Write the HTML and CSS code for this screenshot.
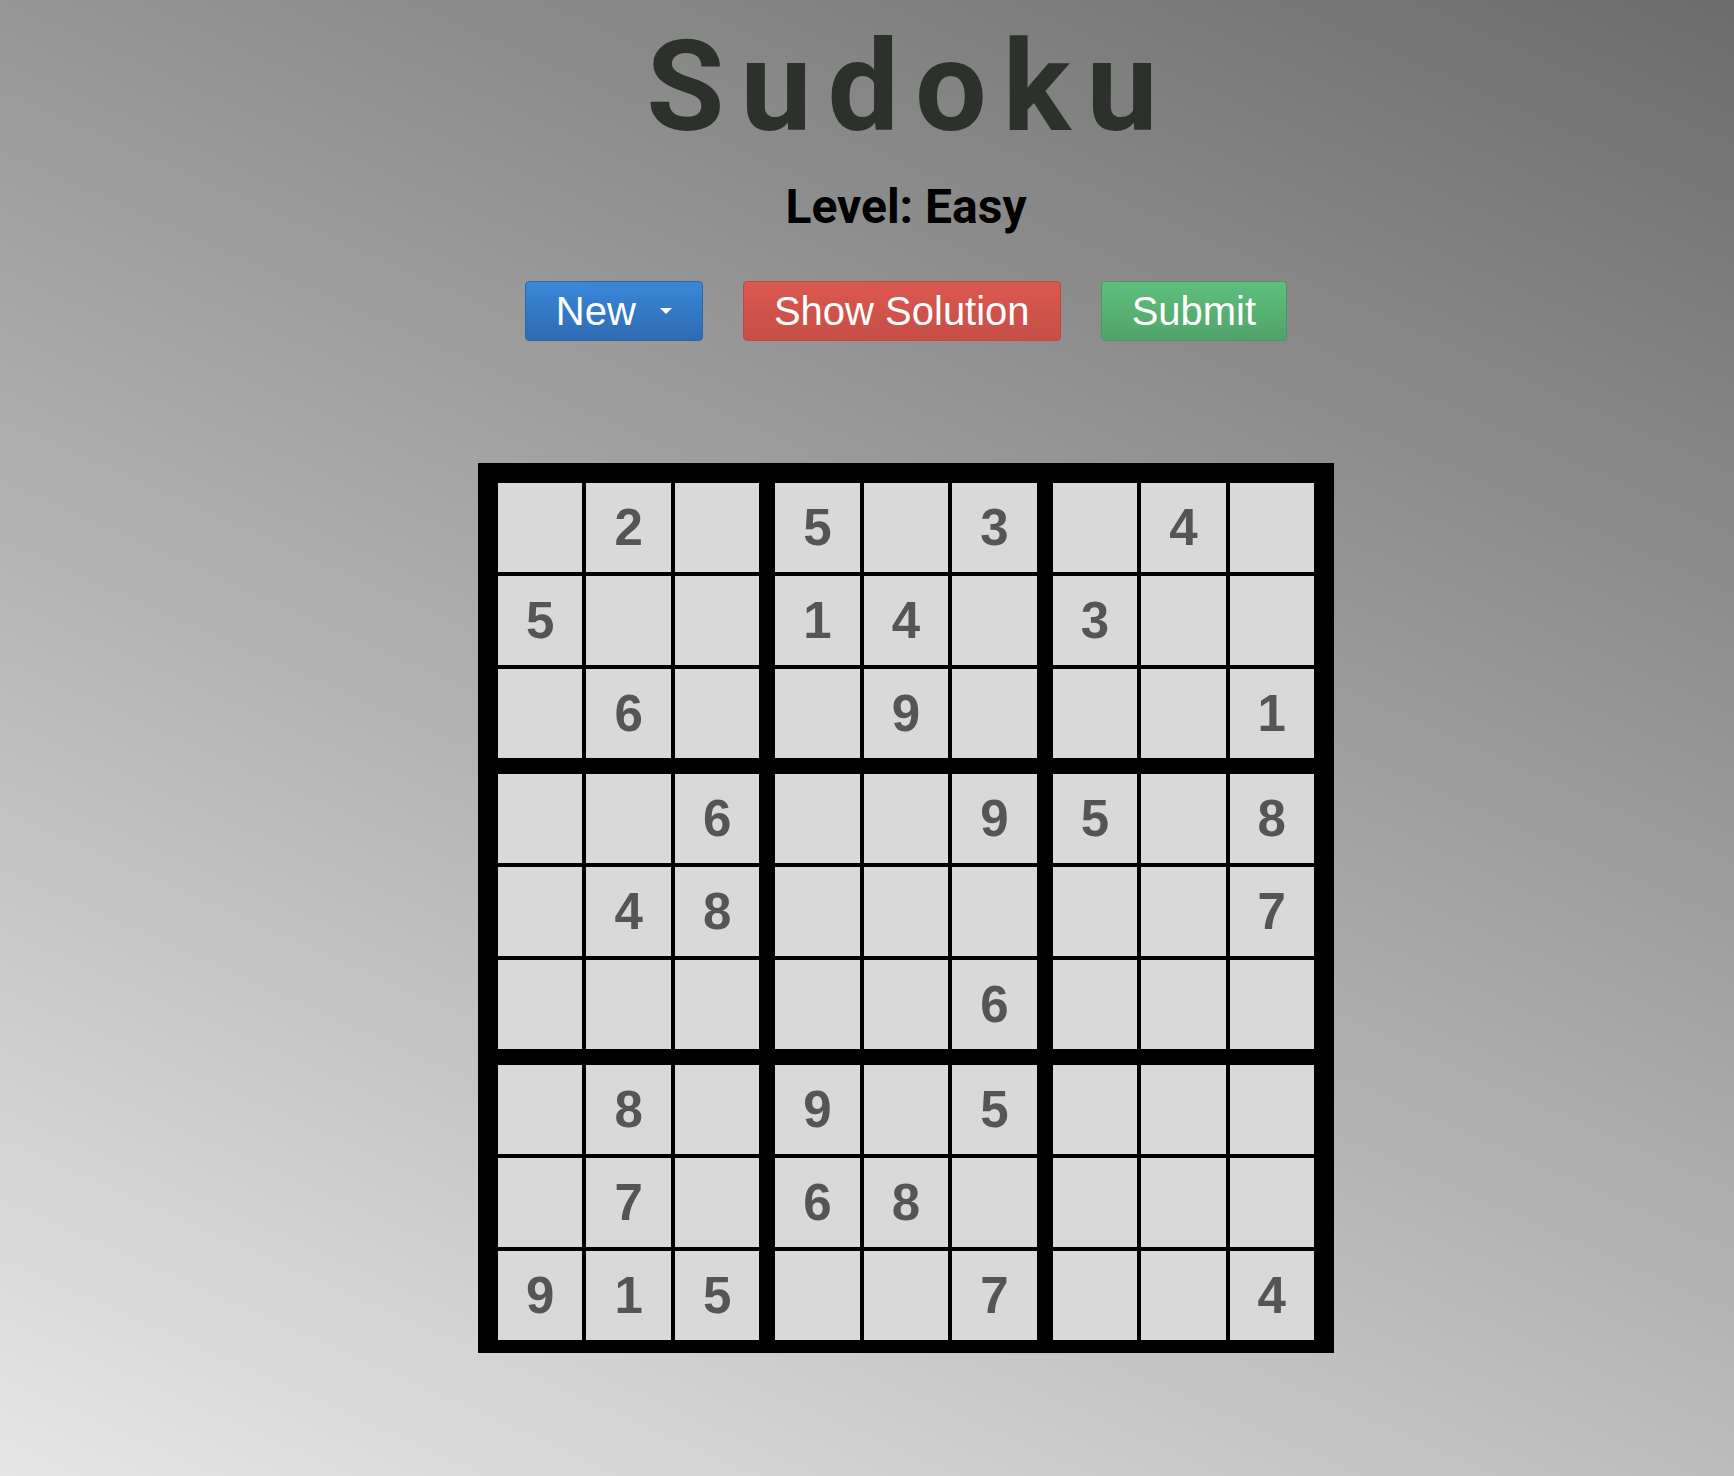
FILE: index.html
```html
<!DOCTYPE html>
<html lang="en">
<head>
<meta charset="utf-8">
<title>Sudoku</title>
<link rel="stylesheet" href="styles.css">
</head>
<body>
<div class="app">
  <h1 class="title">Sudoku</h1>
  <h2 class="level">Level: Easy</h2>
  <div class="actions">
    <button class="btn btn-blue">New<span class="caret"></span></button>
    <button class="btn btn-red">Show Solution</button>
    <button class="btn btn-green">Submit</button>
  </div>
  <div class="board">
    <div class="box"><div class="cell"></div><div class="cell">2</div><div class="cell"></div><div class="cell">5</div><div class="cell"></div><div class="cell"></div><div class="cell"></div><div class="cell">6</div><div class="cell"></div></div>
    <div class="box"><div class="cell">5</div><div class="cell"></div><div class="cell">3</div><div class="cell">1</div><div class="cell">4</div><div class="cell"></div><div class="cell"></div><div class="cell">9</div><div class="cell"></div></div>
    <div class="box"><div class="cell"></div><div class="cell">4</div><div class="cell"></div><div class="cell">3</div><div class="cell"></div><div class="cell"></div><div class="cell"></div><div class="cell"></div><div class="cell">1</div></div>
    <div class="box"><div class="cell"></div><div class="cell"></div><div class="cell">6</div><div class="cell"></div><div class="cell">4</div><div class="cell">8</div><div class="cell"></div><div class="cell"></div><div class="cell"></div></div>
    <div class="box"><div class="cell"></div><div class="cell"></div><div class="cell">9</div><div class="cell"></div><div class="cell"></div><div class="cell"></div><div class="cell"></div><div class="cell"></div><div class="cell">6</div></div>
    <div class="box"><div class="cell">5</div><div class="cell"></div><div class="cell">8</div><div class="cell"></div><div class="cell"></div><div class="cell">7</div><div class="cell"></div><div class="cell"></div><div class="cell"></div></div>
    <div class="box"><div class="cell"></div><div class="cell">8</div><div class="cell"></div><div class="cell"></div><div class="cell">7</div><div class="cell"></div><div class="cell">9</div><div class="cell">1</div><div class="cell">5</div></div>
    <div class="box"><div class="cell">9</div><div class="cell"></div><div class="cell">5</div><div class="cell">6</div><div class="cell">8</div><div class="cell"></div><div class="cell"></div><div class="cell"></div><div class="cell">7</div></div>
    <div class="box"><div class="cell"></div><div class="cell"></div><div class="cell"></div><div class="cell"></div><div class="cell"></div><div class="cell"></div><div class="cell"></div><div class="cell"></div><div class="cell">4</div></div>
  </div>
</div>
</body>
</html>
```
FILE: styles.css
```css
html {
  min-height: 100%;
  background: linear-gradient(204deg, #6c6c6c 0%, #e6e6e6 100%);
}
body {
  margin: 0;
  min-height: 100vh;
  font-family: "Liberation Sans", Arial, sans-serif;
}
.app {
  padding-left: 78px;
  display: flex;
  flex-direction: column;
  align-items: center;
}
.title {
  margin: 13px 0 0 8px;
  font-family: Roboto, "Liberation Sans", sans-serif;
  font-weight: 700;
  font-size: 127px;
  line-height: 148px;
  letter-spacing: 16px;
  color: #2d312c;
}
.level {
  margin: 18px 0 0 0;
  font-family: Roboto, "Liberation Sans", sans-serif;
  font-weight: 700;
  font-size: 48px;
  line-height: 56px;
  color: #000;
}
.actions {
  margin-top: 46px;
  display: flex;
  gap: 40px;
}
.btn {
  height: 60px;
  padding: 0 30px;
  border-radius: 4px;
  border: 1px solid transparent;
  font-family: "Liberation Sans", Arial, sans-serif;
  font-size: 40px;
  color: #fff;
  display: flex;
  align-items: center;
  box-sizing: border-box;
  cursor: pointer;
}
.btn-blue {
  background: linear-gradient(#3a88d8, #2e6bb3);
  border-color: #2d67aa;
}
.btn-red {
  background: linear-gradient(#dc584f, #c54e46);
  border-color: #b94a44;
}
.btn-green {
  background: linear-gradient(#5ebf7d, #51a36a);
  border-color: #4a9765;
}
.caret {
  margin-left: 24px;
  width: 0;
  height: 0;
  border-top: 6px solid #fff;
  border-left: 6px solid transparent;
  border-right: 6px solid transparent;
}
.board {
  margin-top: 122px;
  width: 856px;
  box-sizing: border-box;
  padding: 20px 20px 13px 20px;
  background: #000;
  display: grid;
  grid-template-columns: repeat(3, 1fr);
  gap: 16px;
}
.box {
  display: grid;
  grid-template-columns: repeat(3, 1fr);
  grid-auto-rows: 89px;
  gap: 4px;
}
.cell {
  background: #d9d9d9;
  display: flex;
  align-items: center;
  justify-content: center;
  font-family: "Liberation Sans", Arial, sans-serif;
  font-weight: 700;
  font-size: 51px;
  color: #555;
}
```
